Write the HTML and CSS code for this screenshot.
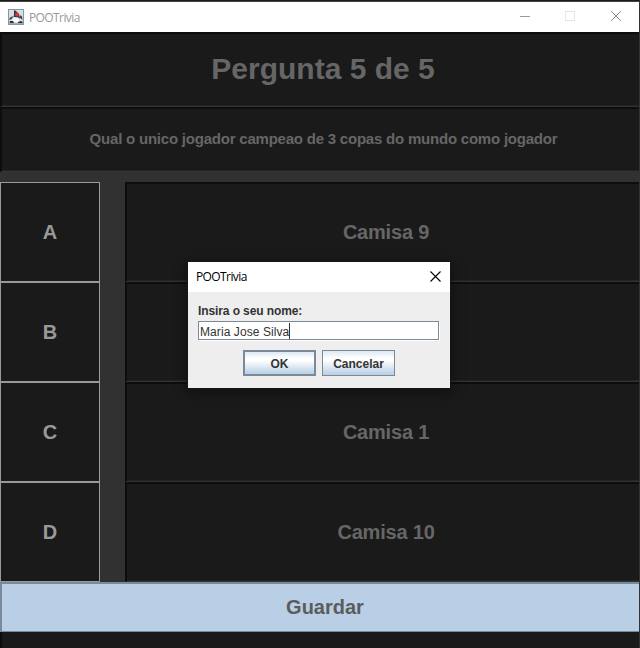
FILE: index.html
```
<!DOCTYPE html>
<html lang="pt">
<head>
<meta charset="utf-8">
<title>POOTrivia</title>
<link rel="stylesheet" href="styles.css">
</head>
<body>
<div class="window">
  <header class="titlebar">
    <svg class="app-icon" viewBox="0 0 16 16" width="16" height="16">
      <rect width="16" height="16" fill="#8797aa"/>
      <rect x="1" y="1" width="14" height="11" fill="#d5dfe9"/>
      <rect x="1" y="12" width="14" height="3" fill="#a4afba"/>
      <path d="M6 1l2 1 3 3 1 4-2 1H5l1-4z" fill="#383a3e"/>
      <path d="M5.500 8l5 .5 1.500 5H4z" fill="#fff"/>
      <path d="M5 7L2 8.500 1 11l3-1zM12 6l2 1.500.5 3.500-2.500-2z" fill="#44474c"/>
      <path d="M2 12h3l1 2H2zM10 13l3-1 2 2h-5z" fill="#303236"/>
      <circle cx="9" cy="5.500" r="1.900" fill="#df3530"/>
    </svg>
    <span class="title">POOTrivia</span>
    <svg class="controls" viewBox="0 0 120 30" width="120" height="30" fill="none" shape-rendering="crispEdges">
      <path d="M1 14.500h10" stroke="#999"/>
      <rect x="46.500" y="9.500" width="9" height="9" stroke="#e6e6e6"/>
      <path d="M92 9l10 10M102 9l-10 10" stroke="#888" shape-rendering="auto"/>
    </svg>
  </header>
  <div class="panel heading">Pergunta 5 de 5</div>
  <div class="panel question">Qual o unico jogador campeao de 3 copas do mundo como jogador</div>
  <main class="answers">
    <div class="letters">
      <div class="letter">A</div>
      <div class="letter">B</div>
      <div class="letter">C</div>
      <div class="letter">D</div>
    </div>
    <div class="options">
      <div class="panel option">Camisa 9</div>
      <div class="panel option"></div>
      <div class="panel option">Camisa 1</div>
      <div class="panel option">Camisa 10</div>
    </div>
  </main>
  <div class="save">Guardar</div>
  <div class="footer"></div>
</div>
<div class="dialog">
  <div class="dialog-bar">
    <span class="title">POOTrivia</span>
    <svg viewBox="0 0 11 11" width="11" height="11"><path d="M.5.5l10 10M10.500.5l-10 10" stroke="#000" stroke-width="1.100"/></svg>
  </div>
  <div class="dialog-body">
    <div class="label">Insira o seu nome:</div>
    <div class="field"><span class="value">Maria Jose Silva</span><i class="caret"></i></div>
    <div class="buttons"><div class="button default">OK</div><div class="button">Cancelar</div></div>
  </div>
</div>
</body>
</html>
```
FILE: styles.css
```
* { box-sizing: border-box; }
body { margin: 0; width: 640px; height: 648px; overflow: hidden; background: #313131; font-family: "Liberation Sans", Arial, sans-serif; font-weight: bold; }
.window { width: 640px; height: 648px; display: flex; flex-direction: column; border-right: 1px solid #333; border-top: 1px solid #1c1c1c; }
.titlebar { height: 31px; flex: none; display: flex; align-items: center; background: #fff; border-top: 1px solid #414141; padding-left: 8px; }
.app-icon { margin-right: 5px; margin-top: -1px; }
.title { font: 12px "Open Sans", sans-serif; letter-spacing: -.6px; color: #999; }
.titlebar .title { margin-top: 0; letter-spacing: -.6px; }
.controls { margin-left: auto; }
.panel { display: flex; align-items: center; justify-content: center; background: #1a1a1a; color: #666; border: 2px solid #0d0d0d; border-right: 0; border-bottom: 1px solid #333; box-shadow: inset 0 -1px #242424; padding-left: 5px; }
.heading { height: 75px; flex: none; padding-bottom: 3px; font-size: 30px; }
.question { height: 65px; flex: none; padding: 0 0 3px 6px; font-size: 15px; letter-spacing: -.215px; }
.answers { height: 400px; flex: none; display: flex; gap: 25px; margin-top: 10px; font-size: 20px; }
.letters { width: 100px; }
.letter { height: 100px; display: flex; align-items: center; justify-content: center; background: #1a1a1a; color: #999; border: 1px solid #999; }
.options { flex: 1; }
.option { height: 100px; padding-left: 6px; padding-bottom: 1px; letter-spacing: -.2px; }
.save { height: 50px; flex: none; display: flex; align-items: center; justify-content: center; background: #b8cfe5; color: #5c5c5c; font-size: 20px; border: 2px solid #7a8a99; border-right: 0; border-bottom-width: 1px; padding-left: 9px; }
.footer { flex: 1; background: #1a1a1a; border-left: 2px solid #0d0d0d; }
.dialog { position: absolute; left: 188px; top: 262px; width: 262px; height: 126px; background: #eee; box-shadow: 0 0 0 1px #151515, 0 3px 12px 2px rgba(0,0,0,.4); color: #333; font-size: 12px; }
.dialog-bar { height: 30px; display: flex; align-items: center; justify-content: space-between; padding: 0 9px 2px 8px; background: #fff; }
.dialog-bar .title { color: #000; padding-top: 1px; }
.dialog-body { padding: 12px 10px 0; }
.label { height: 17px; line-height: 14px; letter-spacing: -.1px; }
.field { height: 19px; width: 241px; display: flex; align-items: center; padding-left: 1px; background: #fff; border: 1px solid #7a8a99; box-shadow: 1px 1px 0 #fff; font-weight: normal; }
.value { padding-top: 2px; letter-spacing: .08px; }
.caret { width: 1px; height: 16px; background: #333; }
.buttons { display: flex; justify-content: center; gap: 6px; margin-top: 10px; }
.button { width: 73px; height: 26px; display: flex; align-items: center; justify-content: center; padding-top: 1px; border: 1px solid #7a8a99; background: linear-gradient(#dde8f3, #fff 30%, #fff 38%, #b8cfe5); }
.default { border-width: 2px; }
```
